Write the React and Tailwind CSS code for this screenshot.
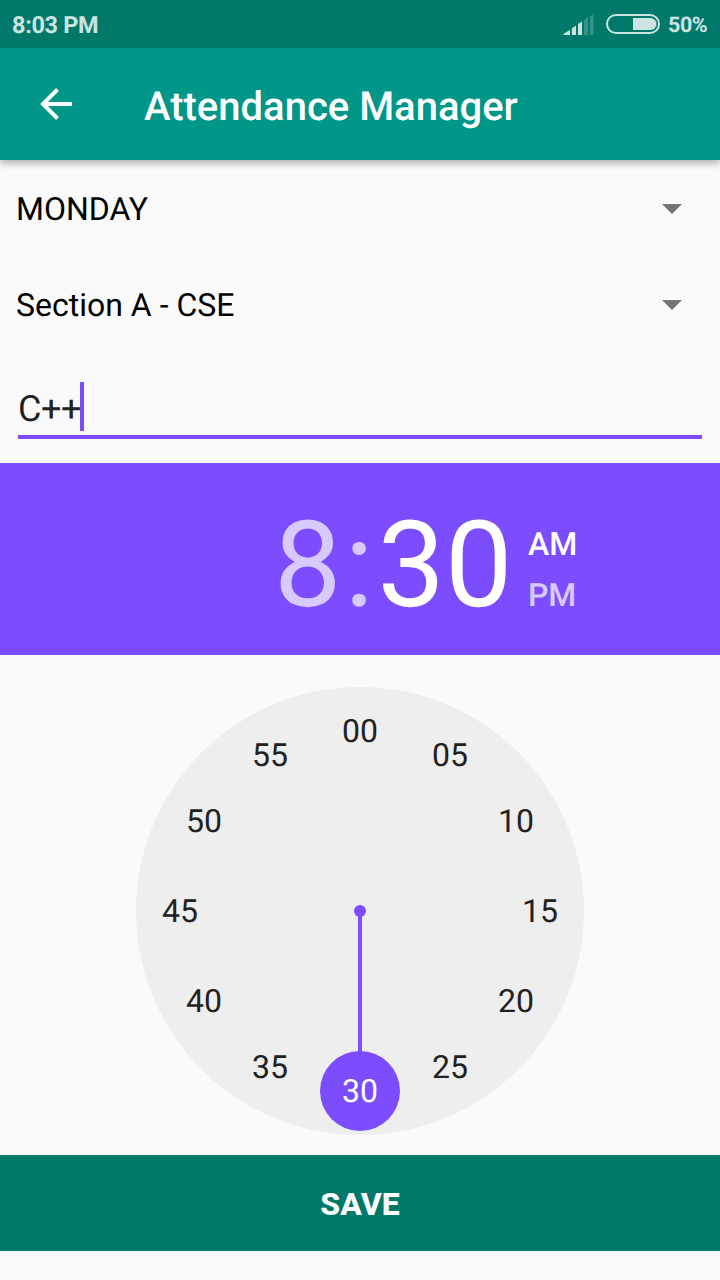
const MINUTES = ['00', '05', '10', '15', '20', '25', '30', '35', '40', '45', '50', '55'];

function StatusBar() {
  return (
    <div className="relative z-10 flex h-12 items-center bg-[#00796b] pl-3 pr-3 text-[#cce4e1]">
      <span className="pt-[2px] text-[23.5px] leading-[28px] font-bold tracking-[-0.35px]">8:03 PM</span>
      <svg className="ml-auto h-12 w-[31px]" viewBox="0 0 31 48" fill="currentColor">
        <path d="M0.500 35V33.800L7 30V35Z" />
        <path d="M8.900 35V28.500L13 25.500V35Z" />
        <path d="M15 35V24L19 21.500V35Z" />
        <path d="M21 35V20L25 17V35Z" opacity=".25" />
        <path d="M26.800 35V16.500L30.500 14V35Z" opacity=".25" />
      </svg>
      <svg className="ml-3 h-12 w-[54px]" viewBox="0 0 54 48" fill="none">
        <rect x="1" y="15" width="52" height="18" rx="9" stroke="currentColor" strokeWidth="2" />
        <path d="M27 18H44.500A6 6 0 0 1 44.500 30H27Z" fill="currentColor" />
      </svg>
      <span className="ml-2 w-[40px] pt-[4px] text-[21.5px] leading-[28px] font-bold tracking-[-0.4px]">50%</span>
    </div>
  );
}

function SpinnerRow({ label }) {
  return (
    <div className="flex h-24 items-center justify-between pl-4 pr-[38px]">
      <span className="pt-[2px] text-[32px] leading-[38px] text-black">{label}</span>
      <svg className="mt-[2px] h-[10px] w-5" viewBox="0 0 20 10" fill="#757575">
        <path d="M0 0H20L10 10Z" />
      </svg>
    </div>
  );
}

function ClockFace({ selected }) {
  return (
    <svg className="h-[448px] w-[448px]" viewBox="0 0 448 448">
      <circle cx="224" cy="224" r="224" fill="#eeeeee" />
      <circle cx="224" cy="224" r="6" fill="#7c4dff" />
      <path d="M224 224V370" stroke="#7c4dff" strokeWidth="4" />
      <circle cx="224" cy="404" r="40" fill="#7c4dff" />
      {MINUTES.map((m, i) => {
        const angle = (i * Math.PI) / 6;
        return (
          <text
            key={m}
            x={Math.round(224 + 180 * Math.sin(angle))}
            y={Math.round(224 - 180 * Math.cos(angle)) + 11}
            textAnchor="middle"
            fontSize="32"
            fill={m === selected ? '#ffffff' : '#212121'}
          >
            {m}
          </text>
        );
      })}
    </svg>
  );
}

export default function App() {
  return (
    <div className="flex h-[1280px] w-[720px] flex-col overflow-hidden bg-[#fafafa] font-['Roboto',sans-serif] [text-rendering:geometricPrecision]">
      <StatusBar />
      <header className="flex h-28 shrink-0 items-center bg-[#009688] pl-10 text-white shadow-[0_3px_8px_rgba(0,0,0,0.32)]">
        <svg className="h-8 w-8" viewBox="0 0 32 32" fill="none" stroke="currentColor" strokeWidth="4">
          <path d="M32 16H3M17.500 1.500L3 16L17.500 30.500" />
        </svg>
        <h1 className="ml-[72px] pt-[6px] text-[40px] leading-[48px] font-medium">Attendance Manager</h1>
      </header>
      <SpinnerRow label="MONDAY" />
      <SpinnerRow label="Section A - CSE" />
      <div className="mx-[18px] mt-[30px] flex h-[57px] items-start border-b-4 border-[#7c4dff]">
        <span className="pt-[5px] text-[36px] leading-[44px] tracking-[-0.4px] text-[#212121]">C++</span>
        <span className="-ml-[1px] h-[49px] w-1 bg-[#7c4dff]" />
      </div>
      <div className="mt-6 flex h-48 shrink-0 bg-[#7c4dff] pl-[274px] text-[#d8caff]">
        <div className="flex pt-[33px] text-[120px] leading-[140px]">
          <span>8</span>
          <span className="ml-[3px]">:</span>
          <span className="ml-1 text-white">30</span>
        </div>
        <div className="ml-[15.5px] flex flex-col pt-[62px] text-[32px] leading-[38px] font-medium">
          <span className="text-white">AM</span>
          <span className="mt-[13px]">PM</span>
        </div>
      </div>
      <div className="flex h-[500px] shrink-0 justify-center pt-8">
        <ClockFace selected="30" />
      </div>
      <button className="h-24 shrink-0 bg-[#00796b] pt-[2px] text-[32px] font-extrabold text-white">SAVE</button>
    </div>
  );
}
